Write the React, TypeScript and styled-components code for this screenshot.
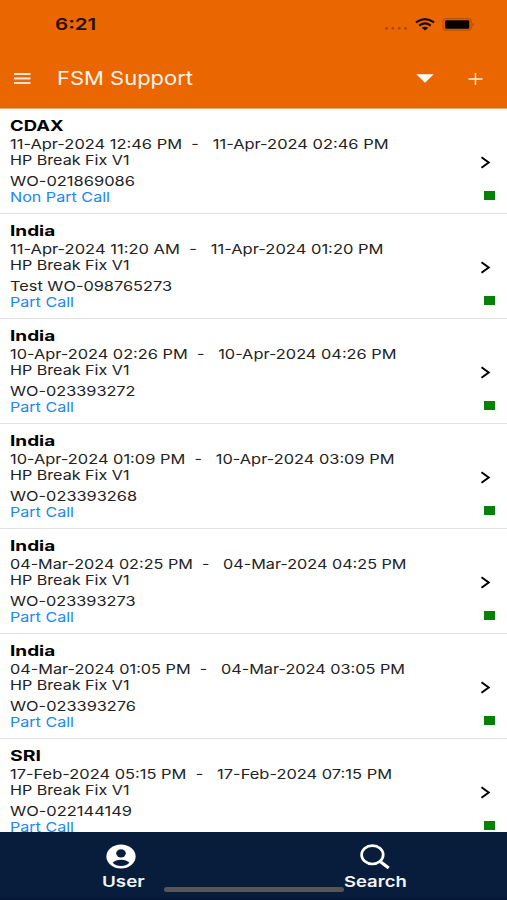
import React, { useLayoutEffect, useRef, useState } from 'react';
import styled, { createGlobalStyle } from 'styled-components';

const GlobalStyle = createGlobalStyle`
  * { box-sizing: border-box; }
  body { margin: 0; background: #fff; font-family: "Inter", "Liberation Sans", sans-serif; }
`;

const Screen = styled.div`
  width: 507px;
  height: 900px;
  display: flex;
  flex-direction: column;
  overflow: hidden;
  background: #fff;
`;

const Header = styled.header`
  flex: none;
  height: 109px;
  display: flex;
  flex-direction: column;
  background: #e96600;
  border-bottom: 1px solid #f0a774;
`;

const StatusBar = styled.div`
  height: 48px;
  padding: 0 32px 0 54.5px;
  display: flex;
  align-items: center;
  justify-content: space-between;
`;

const Toolbar = styled.div`
  height: 60px;
  padding: 0 24px 0 14px;
  display: flex;
  align-items: center;
`;

const ToolbarTitle = styled.div`
  flex: 1;
  padding-left: 26px;
`;

const Icon = styled.svg`
  display: block;
  flex: none;
`;

const TriangleIcon = styled(Icon)`
  margin-right: 34px;
`;

const List = styled.main`
  flex: 1;
  min-height: 0;
  overflow: hidden;
`;

const Row = styled.article`
  height: 105px;
  display: flex;
  justify-content: space-between;
  padding: 9px 12px 0 10.2px;
  border-bottom: 1px solid #e1e1e1;
`;

const Details = styled.div`
  display: flex;
  flex-direction: column;
`;

const RowSide = styled.div`
  display: flex;
  flex-direction: column;
  align-items: flex-end;
  padding-top: 38px;
`;

const Chevron = styled(Icon)`
  margin-right: 4px;
`;

const StatusMark = styled.div`
  width: 11px;
  height: 9px;
  margin-top: 22px;
  background: #078007;
`;

type LineProps = { $size: number; $weight?: number; $color?: string; $height?: number; $gap?: number };

const Line = styled.div<LineProps>`
  display: flex;
  margin-top: ${(p) => p.$gap ?? 0}px;
  height: ${(p) => p.$height ?? 17}px;
  line-height: ${(p) => p.$height ?? 17}px;
  font-size: ${(p) => p.$size}px;
  font-weight: ${(p) => p.$weight ?? 400};
  color: ${(p) => p.$color ?? '#222'};
`;

const Glyphs = styled.span`
  display: block;
  flex: none;
  white-space: pre;
  transform-origin: 0 50%;
`;

const TabBar = styled.nav`
  position: relative;
  flex: none;
  height: 68px;
  display: flex;
  background: #071d3b;
  border-bottom: 1px solid #04142c;
`;

const Tab = styled.div`
  flex: 1;
  display: flex;
  flex-direction: column;
  align-items: center;
  padding-top: 12px;
`;

const TabIcon = styled(Icon)`
  margin-right: 11px;
`;

const TabLabel = styled(Line)<{ $width: number }>`
  width: ${(p) => p.$width}px;
`;

const HomeIndicator = styled.div`
  position: absolute;
  left: 164px;
  top: 55px;
  width: 180px;
  height: 5px;
  border-radius: 3px;
  background: #565658;
`;

/* Extended lettering: stretches a run of text horizontally to a given width. */
function Wide({ width, children }: { width: number; children: string }) {
  const ref = useRef<HTMLSpanElement>(null);
  const [scale, setScale] = useState(1.24);
  useLayoutEffect(() => {
    if (ref.current) setScale(width / parseFloat(getComputedStyle(ref.current).width));
  }, [width, children]);
  return (
    <Glyphs ref={ref} style={{ transform: `scaleX(${scale})` }}>
      {children}
    </Glyphs>
  );
}

type Call = {
  site: [string, number];
  dates: [string, number];
  order: [string, number];
  kind: [string, number];
};

const PART: [string, number] = ['Part Call', 64];
const INDIA: [string, number] = ['India', 45.3];

const calls: Call[] = [
  { site: ['CDAX', 53.6], dates: ['11-Apr-2024 12:46 PM  -   11-Apr-2024 02:46 PM', 378.5], order: ['WO-021869086', 125], kind: ['Non Part Call', 100] },
  { site: INDIA, dates: ['11-Apr-2024 11:20 AM  -   11-Apr-2024 01:20 PM', 373.5], order: ['Test WO-098765273', 162], kind: PART },
  { site: INDIA, dates: ['10-Apr-2024 02:26 PM  -   10-Apr-2024 04:26 PM', 386.5], order: ['WO-023393272', 125.5], kind: PART },
  { site: INDIA, dates: ['10-Apr-2024 01:09 PM  -   10-Apr-2024 03:09 PM', 384.5], order: ['WO-023393268', 127], kind: PART },
  { site: INDIA, dates: ['04-Mar-2024 02:25 PM  -   04-Mar-2024 04:25 PM', 396.5], order: ['WO-023393273', 125.5], kind: PART },
  { site: INDIA, dates: ['04-Mar-2024 01:05 PM  -   04-Mar-2024 03:05 PM', 395], order: ['WO-023393276', 126], kind: PART },
  { site: ['SRI', 31], dates: ['17-Feb-2024 05:15 PM  -   17-Feb-2024 07:15 PM', 382], order: ['WO-022144149', 122], kind: PART },
];

function CallRow({ call }: { call: Call }) {
  return (
    <Row>
      <Details>
        <Line $size={14.7} $weight={700} $color="#000"><Wide width={call.site[1]}>{call.site[0]}</Wide></Line>
        <Line $size={13.5} $gap={1}><Wide width={call.dates[1]}>{call.dates[0]}</Wide></Line>
        <Line $size={13.5} $gap={-1} $height={16}><Wide width={119.5}>HP Break Fix V1</Wide></Line>
        <Line $size={13.5} $gap={5} $height={16}><Wide width={call.order[1]}>{call.order[0]}</Wide></Line>
        <Line $size={13.5} $color="#2088f0"><Wide width={call.kind[1]}>{call.kind[0]}</Wide></Line>
      </Details>
      <RowSide>
        <Chevron width="11" height="13" viewBox="0 0 11 13">
          <path d="M1.5 1.2L8.7 6.5L1.5 11.8" fill="none" stroke="#000" strokeWidth="2" />
        </Chevron>
        <StatusMark />
      </RowSide>
    </Row>
  );
}

export default function App() {
  return (
    <>
      <GlobalStyle />
      <Screen>
        <Header>
          <StatusBar>
            <Line $size={16} $weight={600} $color="#260f00" $height={20}><Wide width={41.2}>6:21</Wide></Line>
            <Icon width="92" height="16" viewBox="383 16 92 16">
              <g fill="#a94a00">
                <circle cx="386.6" cy="28.4" r="1.4" />
                <circle cx="392.9" cy="28.4" r="1.4" />
                <circle cx="399.2" cy="28.4" r="1.4" />
                <circle cx="405.5" cy="28.4" r="1.4" />
              </g>
              <g fill="none" stroke="#1a0900" strokeWidth="2.2">
                <path d="M416 22.4Q425 15.8 434 22.4" />
                <path d="M419.3 25.6Q425 21.3 430.7 25.6" />
              </g>
              <path d="M421.8 27.7Q425 25.6 428.2 27.7L425 30.4Z" fill="#1a0900" />
              <rect x="443.2" y="18.6" width="28" height="11.6" rx="3" fill="none" stroke="#b95000" strokeWidth="1.2" />
              <rect x="445" y="20.2" width="24.3" height="8.5" rx="1.2" fill="#080200" />
              <path d="M472.6 22.6Q475.2 24.4 472.6 26.4Z" fill="#9c4300" />
            </Icon>
          </StatusBar>
          <Toolbar>
            <Icon width="17" height="13" viewBox="0 0 17 13">
              <path d="M0 2H16.5M0 6.5H16.5M0 11H16.5" stroke="#ffe6d0" strokeWidth="2" />
            </Icon>
            <ToolbarTitle>
              <Line $size={19} $gap={2} $color="#fff4ea" $height={24}><Wide width={136}>FSM Support</Wide></Line>
            </ToolbarTitle>
            <TriangleIcon width="18" height="9" viewBox="0 0 18 9">
              <path d="M0.3 0.2H17.7L9 8.8Z" fill="#fff" />
            </TriangleIcon>
            <Icon width="15" height="13" viewBox="0 0 15 13">
              <path d="M0.5 7H14.5M7.5 1V13" stroke="#fff4ea" strokeWidth="1.4" />
            </Icon>
          </Toolbar>
        </Header>
        <List>
          {calls.map((call) => (
            <CallRow key={call.order[0]} call={call} />
          ))}
        </List>
        <TabBar>
          <Tab>
            <TabIcon width="30" height="25" viewBox="0 0 30 25">
              <ellipse cx="15" cy="12.5" rx="14.6" ry="12" fill="#fff" />
              <ellipse cx="15" cy="9.3" rx="4.8" ry="4.1" fill="#071d3b" />
              <path d="M6.6 18.7Q9.5 15.7 15 15.7T23.4 18.7Q20 22 15 22T6.6 18.7Z" fill="#071d3b" />
            </TabIcon>
            <TabLabel $width={50.5} $size={15} $weight={600} $color="#f3f5f8" $height={26}><Wide width={42.8}>User</Wide></TabLabel>
          </Tab>
          <Tab>
            <TabIcon width="30" height="25" viewBox="0 0 30 25">
              <ellipse cx="12.4" cy="10.8" rx="10.8" ry="9.2" fill="none" stroke="#fff" strokeWidth="2.7" />
              <path d="M19.8 17.2L28.7 24" stroke="#fff" strokeWidth="3.2" />
            </TabIcon>
            <TabLabel $width={72} $size={15} $weight={600} $color="#f3f5f8" $height={26}><Wide width={62.7}>Search</Wide></TabLabel>
          </Tab>
          <HomeIndicator />
        </TabBar>
      </Screen>
    </>
  );
}
